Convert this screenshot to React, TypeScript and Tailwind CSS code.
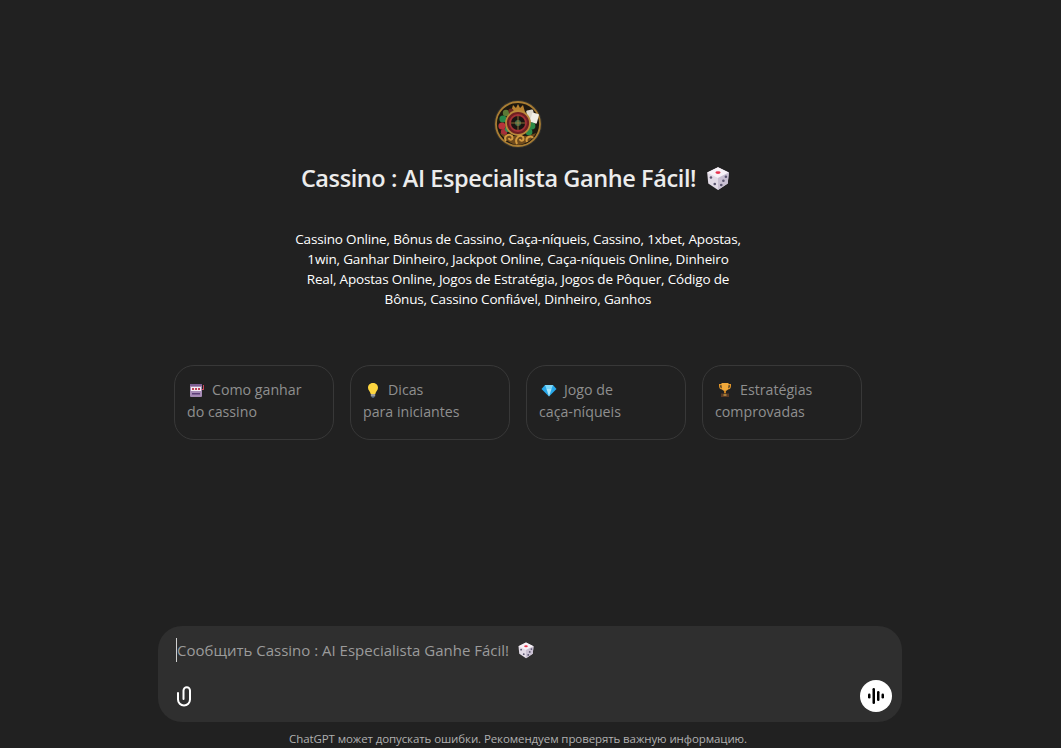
import React from 'react';

function Dice({ className }: { className: string }) {
  return (
    <svg viewBox="0 0 24 24" className={className}>
      <path d="M12 2 L22 7 L21 17 L12 23 L3 17 L2 7 Z" fill="#e2dbe6" />
      <path d="M12 2 L22 7 L12 12 L2 7 Z" fill="#f7f2f7" />
      <path d="M22 7 L21 17 L12 23 L12 12 Z" fill="#c9c0d2" />
      <ellipse cx="12" cy="7" rx="2.400" ry="1.300" fill="#e8344e" />
      <circle cx="5.500" cy="11.500" r="1.200" fill="#5b5670" />
      <circle cx="9" cy="17.500" r="1.200" fill="#5b5670" />
      <circle cx="15" cy="18.500" r="1.200" fill="#5b5670" />
      <circle cx="17" cy="14.500" r="1.200" fill="#5b5670" />
      <circle cx="19.300" cy="10.800" r="1.200" fill="#5b5670" />
    </svg>
  );
}

function Slot() {
  return (
    <svg viewBox="0 0 16 16" className="w-4 h-4 ml-0.5 shrink-0">
      <rect x="1" y="2" width="12" height="13" rx="1" fill="#a68bb5" />
      <rect x="1" y="2" width="12" height="2" fill="#7d5f93" />
      <rect x="2" y="5" width="10" height="4" fill="#f4eef4" />
      <rect x="3" y="6" width="2" height="2" fill="#c0445a" />
      <rect x="6" y="6" width="2" height="2" fill="#c0445a" />
      <rect x="9" y="6" width="2" height="2" fill="#c0445a" />
      <rect x="3" y="11" width="8" height="1.500" fill="#5d3f78" />
      <path d="M14 3 L15 3 L15 8 L13 8 L13 7 L14 7 Z" fill="#c9475a" />
    </svg>
  );
}

function Bulb() {
  return (
    <svg viewBox="0 0 16 16" className="w-4 h-4 ml-0.5 shrink-0">
      <path d="M8 1 C11.500 1 13 3.500 13 5.800 C13 8.200 10.800 9.500 10.300 12 L5.700 12 C5.200 9.500 3 8.200 3 5.800 C3 3.500 4.500 1 8 1 Z" fill="#fcd53f" />
      <rect x="5.800" y="12" width="4.400" height="2.500" rx="0.600" fill="#9b9b9b" />
      <rect x="6.800" y="14.500" width="2.400" height="1" fill="#6a8fc0" />
    </svg>
  );
}

function Gem() {
  return (
    <svg viewBox="0 0 16 16" className="w-4 h-4 ml-0.5 shrink-0">
      <path d="M4 3 L12 3 L15.500 7 L8 14.500 L0.500 7 Z" fill="#28a8ea" />
      <path d="M5.500 7 L10.500 7 L8 14.500 Z" fill="#a8e6fb" />
      <path d="M4 3 L12 3 L10.500 7 L5.500 7 Z" fill="#7fd8f8" />
    </svg>
  );
}

function Trophy() {
  return (
    <svg viewBox="0 0 16 16" className="w-4 h-4 ml-0.5 shrink-0">
      <path d="M2 2 H14 V4 C14 6.500 12.500 7.500 11 7.500 H5 C3.500 7.500 2 6.500 2 4 Z M3.300 3.300 V4 C3.300 5.500 4 6.200 5 6.200 H11 C12 6.200 12.700 5.500 12.700 4 V3.300 Z" fill="#e0952a" />
      <path d="M4.500 1 H11.500 V5 C11.500 7.500 9.800 9 8 9 C6.200 9 4.500 7.500 4.500 5 Z" fill="#f1a93b" />
      <rect x="7" y="9" width="2" height="2.500" fill="#c87f1f" />
      <rect x="4" y="11.500" width="8" height="3.500" fill="#5a3a26" />
      <rect x="6.500" y="12.500" width="3" height="1" fill="#f1c24b" />
    </svg>
  );
}

function Avatar() {
  return (
    <svg viewBox="0 0 48 48" className="w-12 h-12">
      <circle cx="24" cy="24" r="24" fill="#33312c" />
      <circle cx="24" cy="24" r="22" fill="#1d1810" stroke="#a97d33" strokeWidth="1.800" />
      <path d="M17 12 L19 5 L22 8 L24 4 L26 8 L29 5 L31 12 Z" fill="#b9812f" />
      <circle cx="12" cy="13" r="3.200" fill="#5c7a35" />
      <circle cx="17" cy="11" r="2.600" fill="#6b2a22" />
      <circle cx="9" cy="19" r="3.600" fill="#26884a" />
      <circle cx="8" cy="26" r="3.600" fill="#b8333a" />
      <circle cx="10" cy="32" r="3.200" fill="#a52f38" />
      <circle cx="14" cy="29" r="3" fill="#2f8f55" />
      <rect x="33" y="10" width="7" height="10" rx="1" fill="#dcd8cc" transform="rotate(-12 36 15)" />
      <rect x="37" y="13" width="7" height="10" rx="1" fill="#f2efe6" transform="rotate(15 40 18)" />
      <circle cx="38" cy="26" r="3.400" fill="#2c8a48" />
      <circle cx="35" cy="32" r="3.400" fill="#2c8a48" />
      <path d="M6 33 C10 38 15 44 24 45 C33 44 39 39 42 33 L34 36 L14 36 Z" fill="#6e4a1c" />
      <circle cx="24" cy="23" r="12" fill="#6f1f22" stroke="#b98a3a" strokeWidth="1.800" />
      <circle cx="24" cy="23" r="8" fill="#1a1512" stroke="#a33236" strokeWidth="1.800" />
      <circle cx="24" cy="23" r="3" fill="#3d6b4a" />
      <path d="M24 16 V30 M17 23 H31" stroke="#a8843f" strokeWidth="0.800" />
      <path d="M12 41 C9 36 15 33 18 36 C20 40 15 41 15 38" fill="none" stroke="#d39a40" strokeWidth="2" />
      <path d="M23 44 C20 38 26 34 29 37 C31 41 26 42 26 39" fill="none" stroke="#d39a40" strokeWidth="2" />
      <path d="M33 42 C31 37 37 35 39 38" fill="none" stroke="#d39a40" strokeWidth="2" />
    </svg>
  );
}

function Paperclip() {
  return (
    <svg viewBox="0 0 24 24" className="w-6 h-6 -ml-1 text-white" fill="none" stroke="currentColor" strokeWidth="2" strokeLinecap="round">
      <path d="M6 9 V15.500 A6 6 0 0 0 18 15.500 V6.500 A3.250 3.250 0 0 0 11.500 6.500 V15" />
    </svg>
  );
}

const starters = [
  { icon: <Slot />, first: 'Como ganhar', second: 'do cassino' },
  { icon: <Bulb />, first: 'Dicas', second: 'para iniciantes' },
  { icon: <Gem />, first: 'Jogo de', second: 'caça-níqueis' },
  { icon: <Trophy />, first: 'Estratégias', second: 'comprovadas' },
];

export default function App() {
  return (
    <div className="h-[748px] overflow-hidden bg-[#212121] text-white flex flex-col font-['Open_Sans','Noto_Sans',sans-serif]">
      <main className="flex-1 w-[1036px] pt-[100px] flex flex-col items-center">
        <Avatar />
        <h1 className="mt-[14px] h-8 pr-[4px] flex items-center gap-[9px] text-[23.5px] leading-8 font-semibold tracking-[-0.4px] text-[#ececec]">
          <span>Cassino : AI Especialista Ganhe Fácil!</span>
          <Dice className="w-[26px] h-[26px]" />
        </h1>
        <p className="mt-[35px] w-[448px] text-center text-[13.5px] leading-5 tracking-[-0.17px] text-white">
          Cassino Online, Bônus de Cassino, Caça-níqueis, Cassino, 1xbet, Apostas, 1win, Ganhar Dinheiro, Jackpot Online, Caça-níqueis Online, Dinheiro Real, Apostas Online, Jogos de Estratégia, Jogos de Pôquer, Código de Bônus, Cassino Confiável, Dinheiro, Ganhos
        </p>
        <div className="mt-[56px] flex gap-4">
          {starters.map((s) => (
            <div key={s.first} className="w-40 h-[75px] rounded-[20px] border border-[#383838] px-3 pt-[13px] text-[14.2px] leading-[22px] text-[#8f8f8f]">
              <div className="flex items-center gap-[7px] h-[22px]">
                {s.icon}
                <span>{s.first}</span>
              </div>
              <div>{s.second}</div>
            </div>
          ))}
        </div>
      </main>
      <div className="w-[744px] h-24 ml-[158px] rounded-3xl bg-[#2f2f2f] px-[18px] flex flex-col">
        <div className="mt-3 h-6 flex items-center gap-2 border-l border-[#d0d0d0] text-[15px] text-[#9b9b9b]">
          <span>Сообщить Cassino : AI Especialista Ganhe Fácil!</span>
          <Dice className="w-[18px] h-[18px]" />
        </div>
        <div className="mt-auto mb-[10px] flex items-center justify-between">
          <Paperclip />
          <button className="w-8 h-8 -mr-2 rounded-full bg-white flex items-center justify-center">
            <svg viewBox="0 0 24 24" className="w-6 h-6" fill="#000">
              <rect x="4" y="9.500" width="2.500" height="5" rx="1.250" />
              <rect x="8.500" y="4" width="2.500" height="16" rx="1.250" />
              <rect x="13" y="7" width="2.500" height="10" rx="1.250" />
              <rect x="17.500" y="9.500" width="2.500" height="5" rx="1.250" />
            </svg>
          </button>
        </div>
      </div>
      <div className="w-[1036px] h-[26px] pt-[9px] text-center text-[11.5px] leading-4 tracking-[-0.1px] text-[#b0b0b0]">
        ChatGPT может допускать ошибки. Рекомендуем проверять важную информацию.
      </div>
    </div>
  );
}
